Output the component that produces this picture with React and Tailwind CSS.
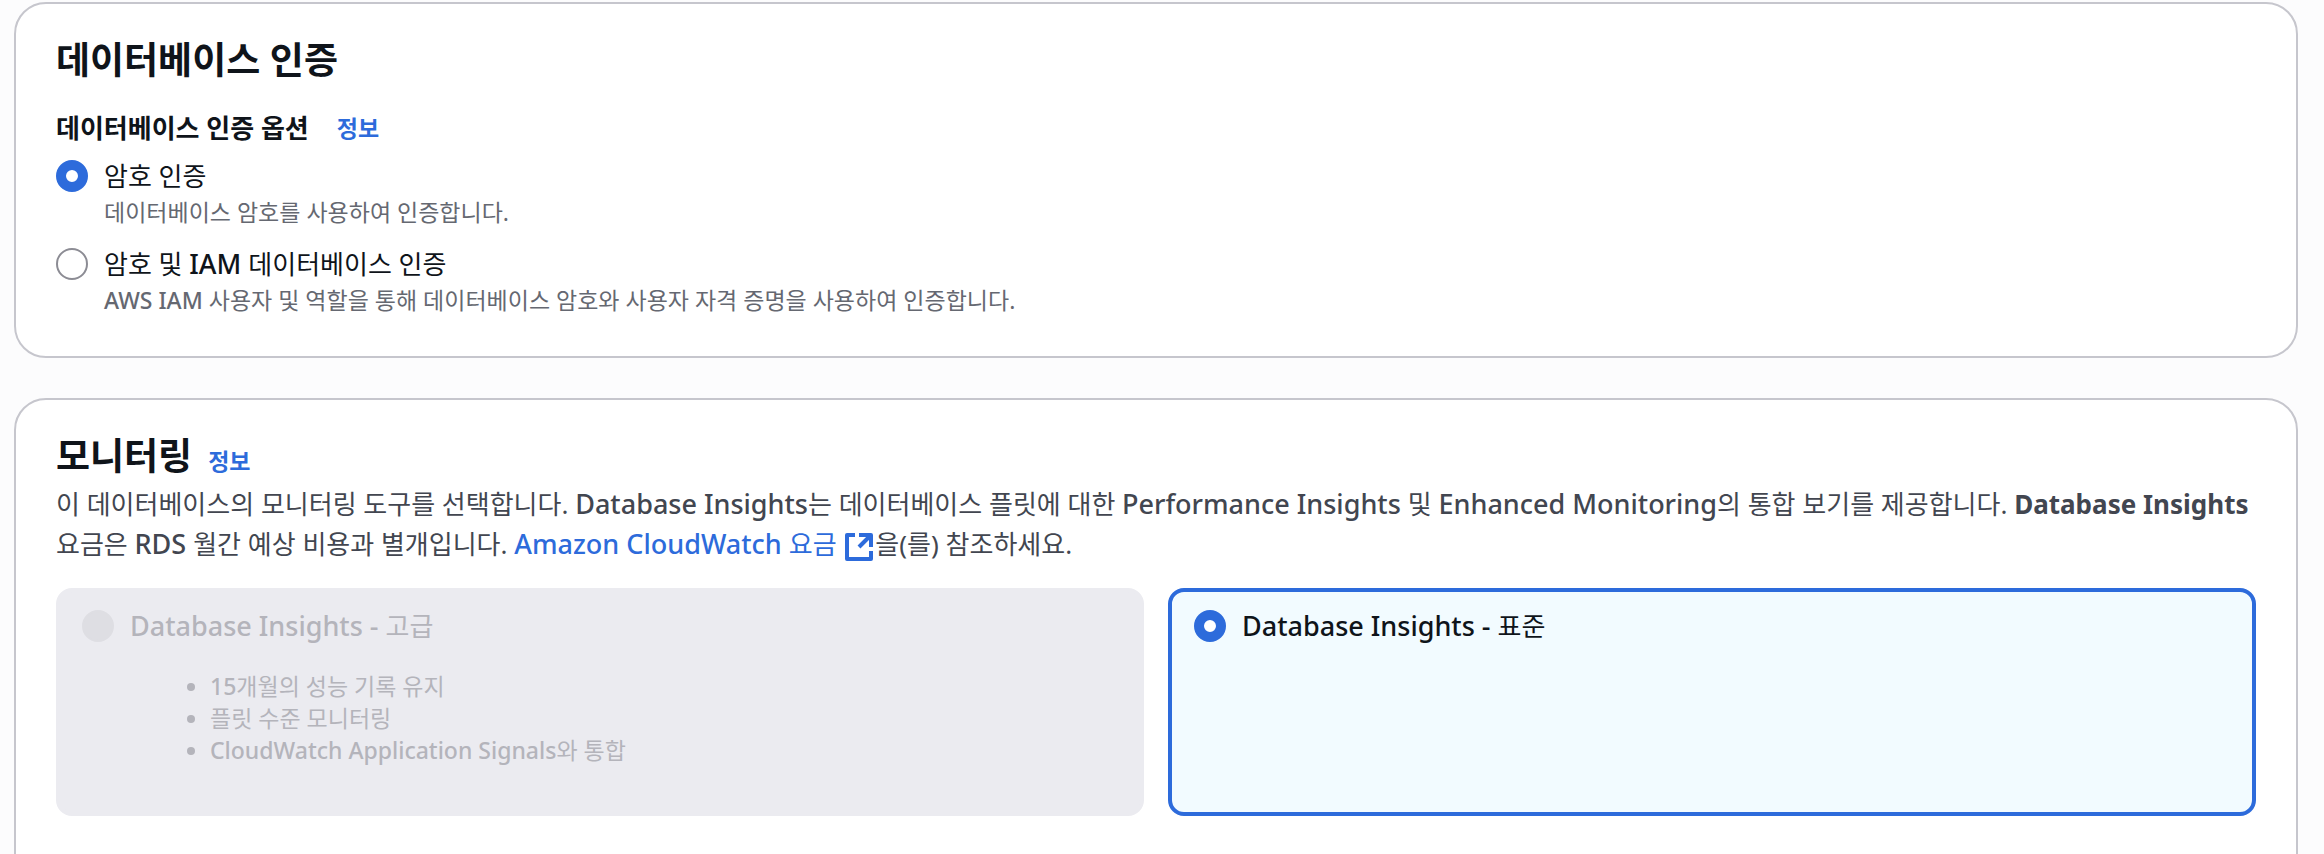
import React, { useState } from 'react';

const Panel = ({ children }) => (
  <section className="rounded-[32px] border-2 border-[#c6c6cd] bg-white px-10 pt-8 pb-10">
    {children}
  </section>
);

const InfoLink = () => (
  <a href="#info" className="text-[23px] leading-8 font-bold text-[#2d6bdb]">
    정보
  </a>
);

const Radio = ({ className = '', ...props }) => (
  <input
    type="radio"
    className={`m-0 h-8 w-8 shrink-0 appearance-none rounded-full border-2 border-[#8c8c94] bg-white checked:border-[10px] checked:border-[#2d6bdb] disabled:border-[#dedee3] disabled:bg-[#dedee3] ${className}`}
    {...props}
  />
);

// Latin words are set slightly larger and heavier than the Hangul around them
const Mixed = ({ text, size = 'text-[27px]' }) =>
  text.split(/([A-Za-z0-9][A-Za-z0-9 -]*)/).map((part, i) =>
    i % 2 ? <span key={i} className={`${size} font-medium`}>{part}</span> : part
  );

const ExternalIcon = () => (
  <svg viewBox="0 0 16 16" className="inline-block h-8 w-8 align-middle" fill="none" stroke="currentColor" strokeWidth="2" strokeLinejoin="round" aria-hidden="true">
    <path d="M8 2h6v6" />
    <path d="m8 8 6-6" />
    <path d="M14 10v4H2V2h4" />
  </svg>
);

const authOptions = [
  {
    id: 'password',
    label: '암호 인증',
    description: '데이터베이스 암호를 사용하여 인증합니다.',
  },
  {
    id: 'iam',
    label: '암호 및 IAM 데이터베이스 인증',
    description: 'AWS IAM 사용자 및 역할을 통해 데이터베이스 암호와 사용자 자격 증명을 사용하여 인증합니다.',
  },
];

const insightFeatures = [
  '15개월의 성능 기록 유지',
  '플릿 수준 모니터링',
  'CloudWatch Application Signals와 통합',
];

const App = () => {
  const [auth, setAuth] = useState('password');

  return (
    <div className="min-h-screen bg-[#fcfcfd] pt-[2px] pr-[26px] pl-[14px] font-['Noto_Sans','Noto_Sans_CJK_KR',sans-serif] text-[26px] leading-10 break-keep text-[#0f141a]">
      <Panel>
        <h2 className="text-[37px] leading-[48px] font-bold">데이터베이스 인증</h2>
        <fieldset className="mt-6">
          <legend className="mb-2 flex items-center gap-7 font-bold">
            데이터베이스 인증 옵션
            <InfoLink />
          </legend>
          <div className="flex flex-col gap-4">
            {authOptions.map((option) => (
              <div key={option.id} className="flex gap-4">
                <Radio
                  id={option.id}
                  name="auth"
                  className="mt-1"
                  checked={auth === option.id}
                  onChange={() => setAuth(option.id)}
                />
                <div>
                  <label htmlFor={option.id} className="block">
                    <Mixed text={option.label} />
                  </label>
                  <p className="text-[23px] leading-8 text-[#656871]">
                    <Mixed text={option.description} size="text-[23px]" />
                  </p>
                </div>
              </div>
            ))}
          </div>
        </fieldset>
      </Panel>

      <div className="mt-10">
        <Panel>
          <div className="flex items-baseline gap-4">
            <h2 className="text-[37px] leading-[48px] font-bold">모니터링</h2>
            <InfoLink />
          </div>
          <p className="mt-1 text-[#424650]">
            <Mixed text="이 데이터베이스의 모니터링 도구를 선택합니다. Database Insights는 데이터베이스 플릿에 대한 Performance Insights 및 Enhanced Monitoring의 통합 보기를 제공합니다. " />
            <b>Database Insights</b>
            <Mixed text=" 요금은 RDS 월간 예상 비용과 별개입니다. " />
            <a href="#pricing" className="text-[#2d6bdb]">
              <Mixed text="Amazon CloudWatch 요금 " />
              <ExternalIcon />
            </a>
            을(를) 참조하세요.
          </p>
          <div className="mt-6 mb-10 grid grid-cols-2 gap-6">
            <div className="rounded-2xl border-4 border-[#ebebf0] bg-[#ebebf0] px-[22px] py-[14px] text-[#b4b4bb]">
              <div className="flex items-center gap-4">
                <Radio id="advanced" name="insights" disabled />
                <label htmlFor="advanced">
                  <Mixed text="Database Insights - 고급" />
                </label>
              </div>
              <ul className="mt-6 mb-8 ml-12 list-disc pl-20 text-[23px] leading-8">
                {insightFeatures.map((feature) => (
                  <li key={feature}>
                    <Mixed text={feature} size="text-[23px]" />
                  </li>
                ))}
              </ul>
            </div>
            <div className="rounded-2xl border-4 border-[#2d6bdb] bg-[#f2fbff] px-[22px] py-[14px]">
              <div className="flex items-center gap-4">
                <Radio id="standard" name="insights" defaultChecked />
                <label htmlFor="standard">
                  <Mixed text="Database Insights - 표준" />
                </label>
              </div>
            </div>
          </div>
        </Panel>
      </div>
    </div>
  );
};

export default App;
